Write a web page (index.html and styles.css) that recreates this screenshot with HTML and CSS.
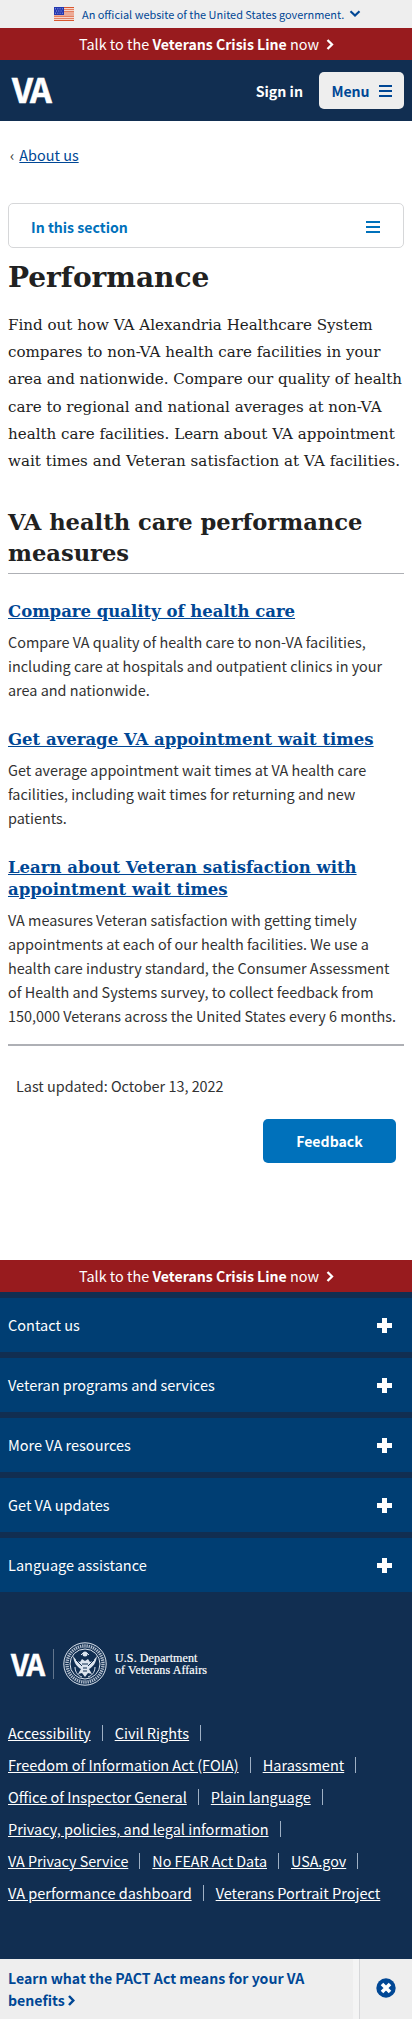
FILE: index.html
```html
<!DOCTYPE html>
<html lang="en">
<head>
<meta charset="utf-8">
<meta name="viewport" content="width=device-width, initial-scale=1">
<title>Performance | VA Alexandria Health Care</title>
<link rel="stylesheet" href="styles.css">
</head>
<body>
<header>
  <div class="gov-banner">
    <svg class="flag" width="20" height="14" viewBox="0 0 20 14"><path fill="#fff" d="M0 0h20v14H0z"/><path stroke="#d9572f" stroke-width="1.1" d="M0 .6h20M0 2.7h20M0 4.9h20M0 7h20M0 9.1h20M0 11.3h20M0 13.4h20"/><path fill="#2438b0" d="M0 0h10v8H0z"/><path stroke="#a5b0ee" stroke-width=".9" stroke-dasharray="1 1.3" d="M1 1.8h8M2 4h7M1 6.2h8"/></svg>
    <span class="gov-text">An official website of the United States government.</span>
    <svg class="gov-chevron" width="12" height="8" viewBox="0 0 12 8"><path fill="none" stroke="#004795" stroke-width="2.2" d="M1.500 1.300 6 5.500l4.500-4.200"/></svg>
  </div>
  <div class="crisis"><span>Talk to the <b>Veterans Crisis Line</b> now</span><svg width="8" height="11" viewBox="0 0 8 11"><path fill="none" stroke="#fff" stroke-width="2.300" d="m1.500 1 4.500 4.500L1.500 10"/></svg></div>
  <div class="masthead">
    <span class="va-logo">VA</span>
    <a class="sign-in">Sign in</a>
    <button class="menu-btn"><span>Menu</span><svg width="13" height="12" viewBox="0 0 13 12"><path stroke="#004795" stroke-width="2" d="M0 1h13M0 6h13M0 11h13"/></svg></button>
  </div>
</header>
<main>
  <nav class="breadcrumb"><span class="crumb-arrow">‹</span><a>About us</a></nav>
  <div class="section-nav"><span>In this section</span><svg width="14" height="12" viewBox="0 0 14 12"><path stroke="#0071bb" stroke-width="2" d="M0 1h14M0 6h14M0 11h14"/></svg></div>
  <h1>Performance</h1>
  <p class="intro">Find out how VA Alexandria Healthcare System<br>compares to non-VA health care facilities in your<br><span class="tight">area and nationwide. Compare our quality of health</span><br>care to regional and national averages at non-VA<br>health care facilities. Learn about VA appointment<br><span class="loose">wait times and Veteran satisfaction at VA facilities.</span></p>
  <h2>VA health care performance<br>measures</h2>
  <section>
    <h3><a>Compare quality of health care</a></h3>
    <p>Compare VA quality of health care to non-VA facilities,<br>including care at hospitals and outpatient clinics in your<br>area and nationwide.</p>
  </section>
  <section>
    <h3><a>Get average VA appointment wait times</a></h3>
    <p>Get average appointment wait times at VA health care<br>facilities, including wait times for returning and new<br>patients.</p>
  </section>
  <section>
    <h3><a>Learn about Veteran satisfaction with<br>appointment wait times</a></h3>
    <p>VA measures Veteran satisfaction with getting timely<br>appointments at each of our health facilities. We use a<br>health care industry standard, the Consumer Assessment<br>of Health and Systems survey, to collect feedback from<br>150,000 Veterans across the United States every 6 months.</p>
  </section>
  <div class="page-end">
    <p class="updated">Last updated: October 13, 2022</p>
    <button class="feedback">Feedback</button>
  </div>
</main>
<footer>
  <div class="crisis"><span>Talk to the <b>Veterans Crisis Line</b> now</span><svg width="8" height="11" viewBox="0 0 8 11"><path fill="none" stroke="#fff" stroke-width="2.300" d="m1.500 1 4.500 4.500L1.500 10"/></svg></div>
  <ul class="accordion">
    <li><span>Contact us</span><i class="plus"></i></li>
    <li><span>Veteran programs and services</span><i class="plus"></i></li>
    <li><span>More VA resources</span><i class="plus"></i></li>
    <li><span>Get VA updates</span><i class="plus"></i></li>
    <li><span>Language assistance</span><i class="plus"></i></li>
  </ul>
  <div class="brand">
    <span class="brand-va">VA</span>
    <svg class="seal" width="44" height="44" viewBox="0 0 44 44"><g fill="none" stroke="#dce4ee"><circle cx="22" cy="22" r="21.200" stroke-width="1"/><circle cx="22" cy="22" r="18" stroke-width="3.400" stroke-dasharray="1.300 .9" opacity=".8"/><circle cx="22" cy="22" r="15" stroke-width="1"/></g><path fill="#dce4ee" d="M10 14c1 7 4 11 8 13l-3 5 4-1 3 4 3-4 4 1-3-5c4-2 7-6 8-13l-4 5-3 1-2-3-3 2-3-2-2 3-3-1z"/><path stroke="#112e51" d="m13 18 6 6M31 18l-6 6M19 22h6M20 26h4M20 29h4"/><path fill="none" stroke="#dce4ee" d="M12 25c0 6 4 9 7 10M32 25c0 6-4 9-7 10M18 13l2-2M26 13l-2-2"/><circle cx="22" cy="12" r="2.500" fill="#dce4ee"/></svg>
    <span class="brand-name">U.S. Department<br>of Veterans Affairs</span>
  </div>
  <div class="links">
    <div><a>Accessibility</a><i></i><a>Civil Rights</a><i></i></div>
    <div><a>Freedom of Information Act (FOIA)</a><i></i><a>Harassment</a><i></i></div>
    <div><a>Office of Inspector General</a><i></i><a>Plain language</a><i></i></div>
    <div><a>Privacy, policies, and legal information</a><i></i></div>
    <div><a>VA Privacy Service</a><i></i><a>No FEAR Act Data</a><i></i><a>USA.gov</a><i></i></div>
    <div><a>VA performance dashboard</a><i></i><a>Veterans Portrait Project</a></div>
  </div>
</footer>
<aside class="promo">
  <a class="promo-link">Learn what the PACT Act means for your VA<br>benefits <svg width="7" height="11" viewBox="0 0 7 11"><path fill="none" stroke="#004795" stroke-width="2.500" d="m1 1 4.300 4.500L1 10"/></svg></a>
  <div class="promo-close"><svg width="20" height="20" viewBox="0 0 20 20"><circle cx="10" cy="10" r="9.700" fill="#004795"/><path stroke="#fff" stroke-width="3.600" d="m6 6 8 8m0-8-8 8"/></svg></div>
</aside>
</body>
</html>
```
FILE: styles.css
```css
* { box-sizing: border-box; }
body {
  margin: 0;
  background: #fff;
  color: #323232;
  font: 14.42px/24px "Noto Sans CJK SC", "Open Sans", sans-serif;
  white-space: nowrap;
}
p, h1, h2, h3, ul { margin: 0; padding: 0; }
button { border: 0; padding: 0; font: inherit; font-weight: 700; font-size: 14.1px; }
b { font-size: 14.1px; }
svg { display: block; flex: none; }

.gov-banner {
  height: 28px;
  display: flex;
  align-items: center;
  padding-left: 54px;
  background: #eee;
  color: #004795;
  font-size: 10.93px;
}
.gov-text { margin-left: 8px; }
.gov-chevron { margin-left: 5px; }

.crisis {
  height: 32px;
  display: flex;
  align-items: center;
  padding-left: 79px;
  gap: 7px;
  background: #981b1e;
  color: #fff;
}
.masthead {
  height: 61px;
  display: flex;
  align-items: center;
  padding: 0 8px 0 12px;
  background: #112e51;
  color: #fff;
}
.va-logo {
  flex: 1;
  padding-bottom: 3px;
  font: 700 34px/40px "Noto Sans CJK SC", sans-serif;
  letter-spacing: -2.300px;
  -webkit-text-stroke: .6px #fff;
}
.sign-in { font-weight: 700; font-size: 14.2px; margin-right: 16px; }
.menu-btn {
  width: 85px;
  height: 37px;
  display: flex;
  align-items: center;
  justify-content: center;
  gap: 9px;
  border-radius: 5px;
  background: #eee;
  color: #004795;
}

main { padding: 0 8px; height: 1139px; }
.breadcrumb {
  padding: 22px 0 0 2px;
  height: 82px;
  display: flex;
  gap: 5px;
}
.breadcrumb a { color: #004795; text-decoration: underline; }
.section-nav {
  height: 45px;
  display: flex;
  align-items: center;
  justify-content: space-between;
  padding: 3px 23px 0 22px;
  border: 1px solid #d6d7d9;
  border-radius: 5px;
  color: #0071bb;
  font-weight: 700;
  font-size: 14.1px;
}
h1, h2, h3, .intro { font-family: "DejaVu Serif", serif; }
h1 {
  margin-top: 10px;
  color: #212121;
  font-size: 28px;
  line-height: 39px;
}
.intro {
  margin-top: 15px;
  color: #212121;
  font-size: 15.1px;
  line-height: 27.2px;
}
.tight { letter-spacing: -.06px; }
.loose { letter-spacing: .04px; }
h2 {
  margin-top: 32px;
  height: 67px;
  border-bottom: 1px solid #aeb0b5;
  color: #212121;
  font-size: 22.600px;
  line-height: 31px;
}
h3 {
  font-size: 16.500px;
  line-height: 22px;
}
h3 a { color: #004795; text-decoration: underline; }
section { padding-top: 27px; }
section p { margin-top: 7px; }
.page-end {
  margin-top: 16px;
  border-top: 2px solid #aeb0b5;
  padding: 28px 8px 0;
}
.feedback {
  display: block;
  margin: 21px 0 0 auto;
  width: 133px;
  height: 44px;
  border-radius: 5px;
  background: #0071bb;
  color: #fff;
}

footer { height: 699px; background: #112e51; color: #fff; font-size: 14.520px; }
footer .crisis { font-size: 14.420px; }
.accordion {
  list-style: none;
  padding-top: 6px;
  display: grid;
  gap: 6px;
}
.accordion li {
  height: 54px;
  padding: 0 20px 0 8px;
  display: flex;
  align-items: center;
  justify-content: space-between;
  background: #003e73;
}
.plus {
  width: 15px;
  height: 15px;
  background: linear-gradient(#fff, #fff) center / 5px 15px no-repeat, linear-gradient(#fff, #fff) center / 15px 5px no-repeat;
}
.brand {
  margin-top: 50px;
  height: 44px;
  display: flex;
  align-items: center;
  padding-left: 11px;
}
.brand-va {
  width: 43px;
  height: 30px;
  border-right: 1px solid #62758d;
  font: 700 29px/28px "Noto Sans CJK SC", sans-serif;
  letter-spacing: -2px;
  -webkit-text-stroke: .5px #fff;
}
.seal { margin-left: 9px; }
.brand-name {
  margin-left: 8px;
  font: 12px/12px "Liberation Serif", serif;
  letter-spacing: .1px;
  -webkit-text-stroke: .2px #fff;
}
.links { margin: 31px 0 0 8px; }
.links div { height: 32px; display: flex; align-items: center; }
.links div:nth-child(5) { font-size: 14.3px; }
.links a { text-decoration: underline; }
.links i { width: 1px; height: 16px; margin: 0 12px 0 11px; background: #9fb0c4; }

.promo { height: 60px; display: flex; background: #eee; color: #004795; }
.promo-link {
  width: 359px;
  padding: 8px 0 0 8px;
  border-right: 6px solid #f4f4f4;
  font-weight: 700;
  font-size: 14.1px;
  line-height: 22px;
}
.promo-link svg { display: inline-block; }
.promo-close {
  flex: 1;
  display: flex;
  align-items: center;
  justify-content: center;
  padding-bottom: 3px;
  border-left: 1px solid #d6d7d9;
}
```
